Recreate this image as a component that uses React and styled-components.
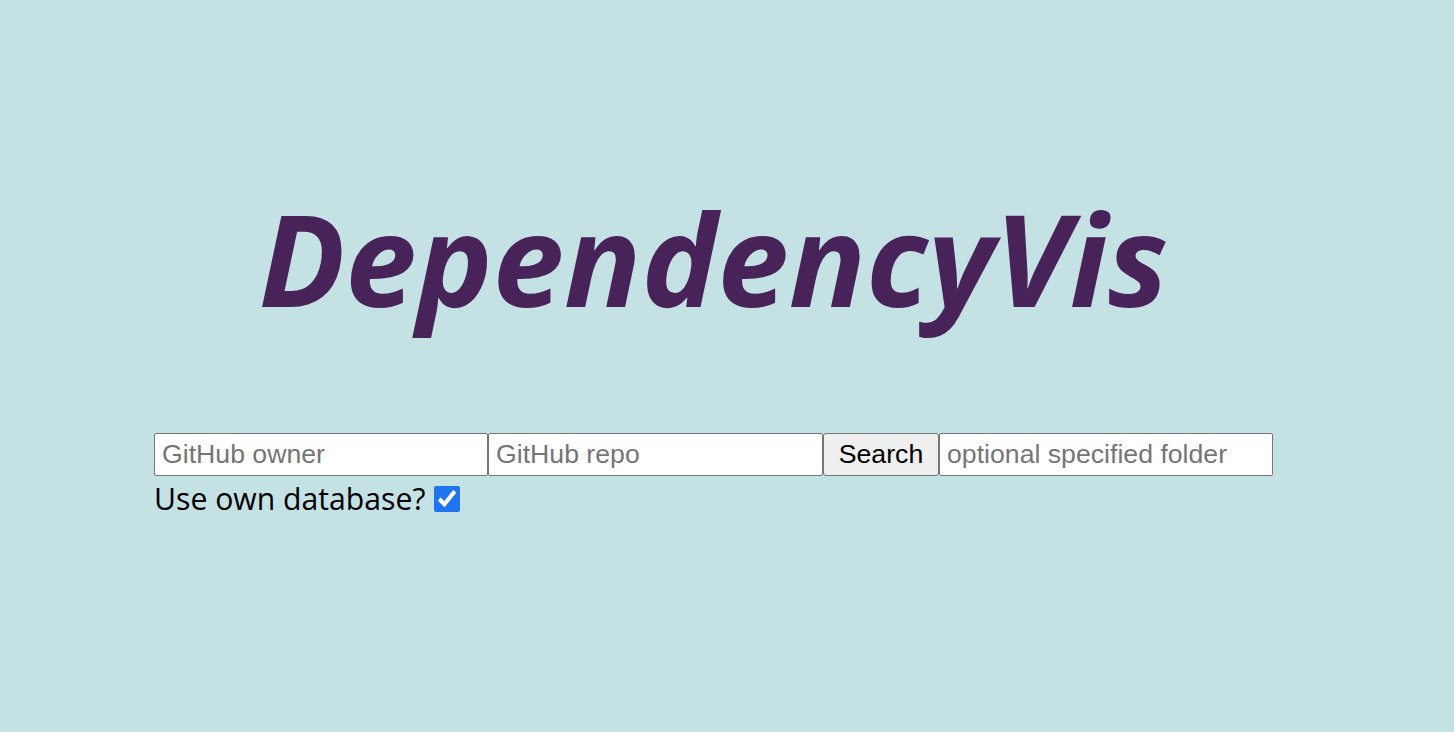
import React from "react";
import styled, { createGlobalStyle } from "styled-components";

const Global = createGlobalStyle`
  html, body { margin: 0; padding: 0; background: #c4e2e4; }
  body { font-family: "Open Sans", "Liberation Sans", sans-serif; }
`;

const Page = styled.main`
  width: 1119px;
  margin-left: 154px;
  padding-top: 183px;
  display: flex;
  flex-direction: column;
`;

const Title = styled.h1`
  margin: 0 0 100px 0;
  text-align: center;
  font-family: "Open Sans", sans-serif;
  font-style: italic;
  font-weight: 700;
  font-size: 128px;
  line-height: 150px;
  letter-spacing: 0px;
  color: #48235a;
`;

const Row = styled.div`
  display: flex;
  align-items: stretch;
  height: 43px;
`;

const TextInput = styled.input`
  box-sizing: border-box;
  width: ${(p) => p.$width || 334}px;
  height: 43px;
  margin: 0;
  padding: 0 7px;
  border: 1px solid #767676;
  border-radius: 2px;
  background: #fff;
  font-family: "Liberation Sans", Arial, sans-serif;
  font-size: 26.67px;
  color: #000;
  outline: none;
  &::placeholder { color: #757575; }
`;

const Button = styled.button`
  box-sizing: border-box;
  width: 116px;
  height: 43px;
  margin: 0;
  padding: 0 14px;
  border: 1px solid #767676;
  border-radius: 3px;
  background: #efefef;
  font-family: "Liberation Sans", Arial, sans-serif;
  font-size: 26.67px;
  color: #000;
`;

const CheckRow = styled.label`
  display: flex;
  align-items: center;
  gap: 9px;
  margin-top: 2px;
  font-family: "Open Sans", sans-serif;
  font-size: 30.2px;
  color: #000;
`;

const Check = styled.input`
  width: 26px;
  height: 26px;
  margin: 0;
  accent-color: #1f74f0;
`;

export default function App() {
  return (
    <>
      <Global />
      <Page>
        <Title>DependencyVis</Title>
        <Row>
          <TextInput $width={334} placeholder="GitHub owner" />
          <TextInput $width={335} placeholder="GitHub repo" />
          <Button>Search</Button>
          <TextInput $width={334} placeholder="optional specified folder" />
        </Row>
        <CheckRow>
          Use own database?
          <Check type="checkbox" defaultChecked />
        </CheckRow>
      </Page>
    </>
  );
}
